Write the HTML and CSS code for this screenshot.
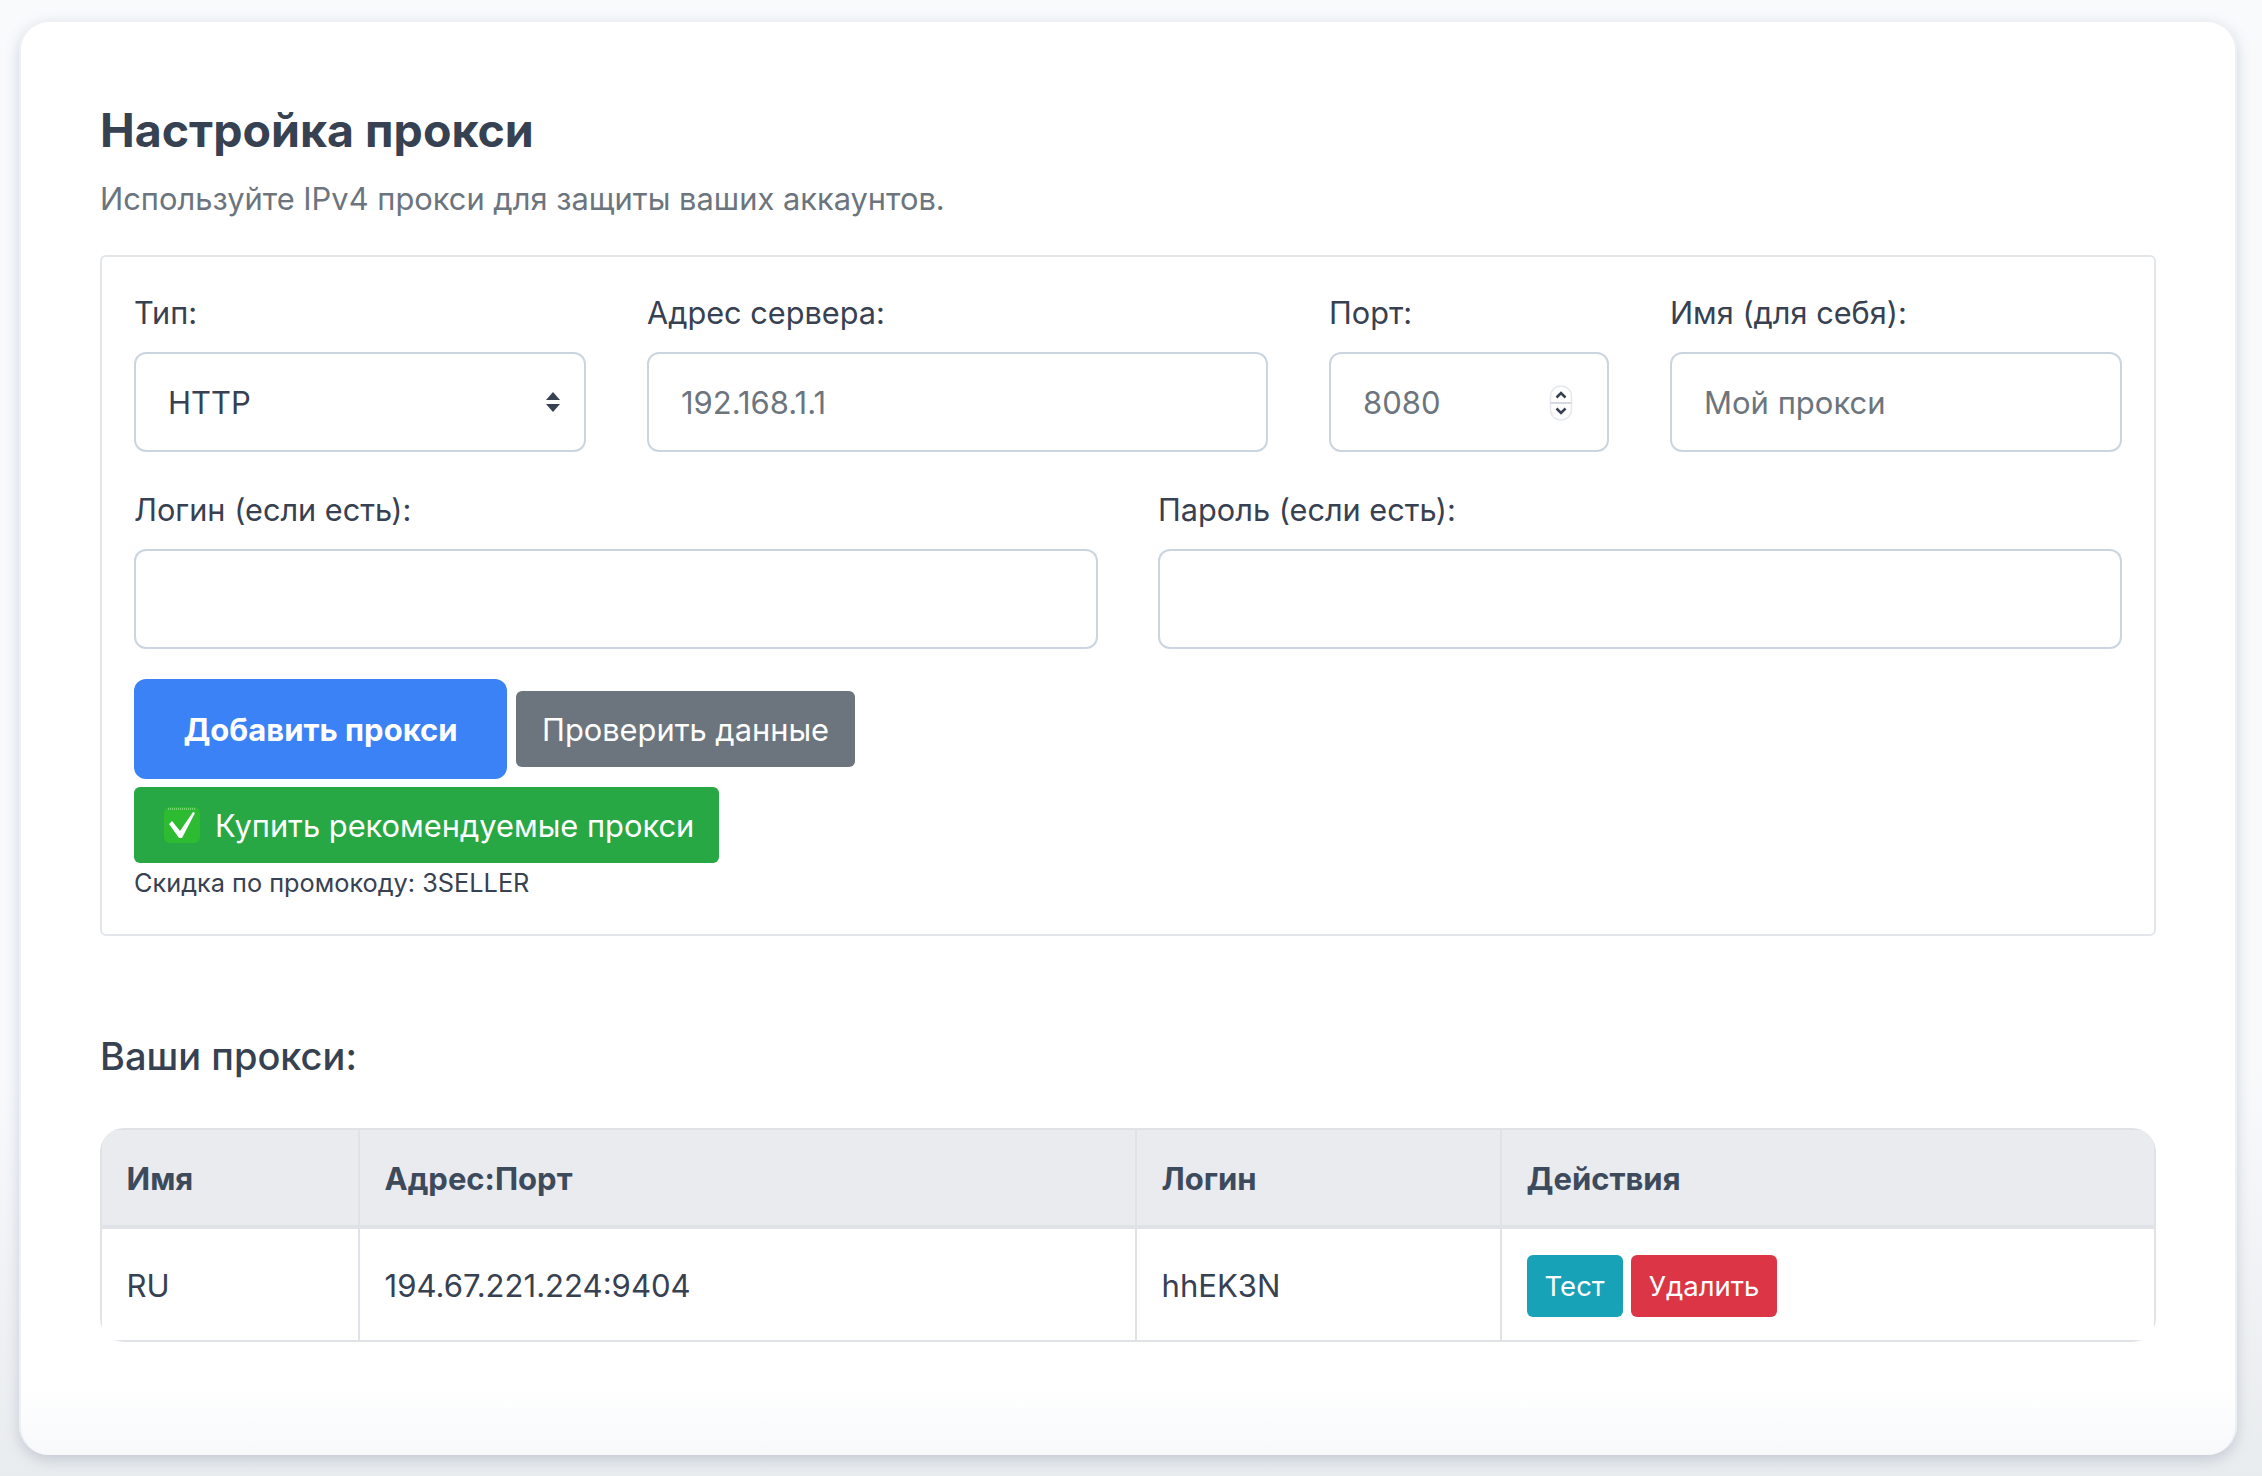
FILE: index.html
```html
<!DOCTYPE html>
<html>
<head>
    <title>Настройка прокси</title>
    <link rel="stylesheet" href="styles.css">
</head>
<body>
    <div class="card">
        <h1>Настройка прокси</h1>
        <p class="subtitle">Используйте IPv4 прокси для защиты ваших аккаунтов.</p>

        <div class="panel">
            <div class="form-row">
                <div class="field field-type">
                    <label for="proxyType">Тип:</label>
                    <div class="control-wrap">
                        <select id="proxyType">
                            <option>HTTP</option>
                            <option>SOCKS5</option>
                        </select>
                        <svg class="select-arrows" width="16" height="22" viewBox="0 0 16 22">
                            <path d="M8 1 15 9H1z M1 13H15L8 21z" fill="#374151"/>
                        </svg>
                    </div>
                </div>
                <div class="field field-host">
                    <label for="proxyHost">Адрес сервера:</label>
                    <input type="text" id="proxyHost" placeholder="192.168.1.1">
                </div>
                <div class="field field-port">
                    <label for="proxyPort">Порт:</label>
                    <div class="control-wrap">
                        <input type="text" id="proxyPort" placeholder="8080">
                        <svg class="port-spinner" width="24" height="36" viewBox="0 0 24 36">
                            <rect x="1.500" y="1" width="21" height="34" rx="10.500" fill="#fff" stroke="#e5e8ec" stroke-width="1.500"/>
                            <path d="M1.500 18H22.500" stroke="#d5dae1" stroke-width="2"/>
                            <path d="M7.500 12.500 12 8 16.500 12.500M7.500 23.500 12 28 16.500 23.500" fill="none" stroke="#374151" stroke-width="2.600"/>
                        </svg>
                    </div>
                </div>
                <div class="field field-name">
                    <label for="proxyName">Имя (для себя):</label>
                    <input type="text" id="proxyName" placeholder="Мой прокси">
                </div>
            </div>

            <div class="form-row form-row-half">
                <div class="field field-half">
                    <label for="proxyLogin">Логин (если есть):</label>
                    <input type="text" id="proxyLogin">
                </div>
                <div class="field field-half">
                    <label for="proxyPass">Пароль (если есть):</label>
                    <input type="password" id="proxyPass">
                </div>
            </div>

            <div class="button-row">
                <button class="btn-primary">Добавить прокси</button>
                <button class="btn btn-gray">Проверить данные</button>
            </div>
            <a class="btn btn-green">
                <svg class="check-icon" width="36" height="36" viewBox="0 0 36 36">
                    <rect width="36" height="36" rx="6" fill="#2dbb32"/>
                    <path d="M4 2H32" stroke="#b5eeb0" stroke-width="1" stroke-dasharray="1 1"/>
                    <path d="M5 17 8 14 16 24 29 5 31 6 18 31H15z" fill="#fff"/>
                </svg>
                Купить рекомендуемые прокси
            </a>
            <div class="promo">Скидка по промокоду: 3SELLER</div>
        </div>

        <h3>Ваши прокси:</h3>

        <div class="table-wrap">
            <table>
                <thead>
                    <tr>
                        <th class="col-name">Имя</th>
                        <th class="col-addr">Адрес:Порт</th>
                        <th class="col-login">Логин</th>
                        <th>Действия</th>
                    </tr>
                </thead>
                <tbody>
                    <tr>
                        <td>RU</td>
                        <td>194.67.221.224:9404</td>
                        <td>hhEK3N</td>
                        <td>
                            <div class="actions">
                                <button class="btn-small btn-teal">Тест</button>
                                <button class="btn-small btn-red">Удалить</button>
                            </div>
                        </td>
                    </tr>
                </tbody>
            </table>
        </div>
    </div>
</body>
</html>
```

FILE: styles.css
```css
* {
    box-sizing: border-box;
}
body {
    margin: 0;
    padding: 20px 25px 21px 19px;
    min-height: 1476px;
    font-family: Inter, "Noto Sans", sans-serif;
    color: #374151;
    background: linear-gradient(to bottom, #f8fafc 0%, #f8fafc 72%, #e9ecef 100%);
}
.card {
    height: 1435px;
    padding: 80px 79px 0 79px;
    background: linear-gradient(to bottom, #fff 95%, #f7f9fb 100%);
    border: 2px solid #edf0f4;
    border-bottom: none;
    border-radius: 30px;
    box-shadow: 0 5px 14px rgba(100, 116, 139, 0.28);
}
h1 {
    margin: 0;
    font-size: 46.500px;
    line-height: 56px;
    font-weight: 700;
    color: #364152;
}
.subtitle {
    margin: 18px 0 0 0;
    font-size: 30.850px;
    line-height: 46px;
    color: #6c757d;
}
.panel {
    margin-top: 33px;
    height: 681px;
    padding: 34px 32px 0 32px;
    border: 2px solid #e2e6ea;
    border-radius: 6px;
}
.form-row {
    display: flex;
    gap: 61px;
    margin-bottom: 36px;
}
.form-row-half {
    gap: 60px;
}
.field-type { width: 452px; }
.field-host { width: 621px; }
.field-port { width: 280px; }
.field-name { width: 452px; }
.field-half { width: 964px; }
label {
    display: block;
    margin-bottom: 17px;
    font-size: 30.700px;
    line-height: 44px;
    color: #374151;
}
input, select {
    display: block;
    width: 100%;
    height: 100px;
    padding: 0 32px;
    background: #fff;
    border: 2px solid #cbd5e0;
    border-radius: 12px;
    font-family: inherit;
    font-size: 31px;
    color: #374151;
    appearance: none;
}
input::placeholder {
    color: #6c757d;
    opacity: 1;
}
.control-wrap {
    position: relative;
}
.select-arrows {
    position: absolute;
    right: 25px;
    top: 39px;
}
.port-spinner {
    position: absolute;
    right: 36px;
    top: 33px;
}
.button-row {
    display: flex;
    align-items: center;
    gap: 9px;
    margin-top: -6px;
}
button {
    font-family: inherit;
    border: none;
    color: #fff;
}
.btn-primary {
    width: 373px;
    height: 100px;
    background: #3b82f6;
    border-radius: 12px;
    font-size: 31px;
    font-weight: 700;
}
.btn {
    display: flex;
    align-items: center;
    height: 76px;
    padding: 0 26px;
    border-radius: 6px;
    font-size: 30.800px;
    color: #fff;
    white-space: nowrap;
}
.btn-gray {
    background: #6c757d;
}
.btn-green {
    width: 585px;
    margin-top: 8px;
    padding-left: 30px;
    background: #28a745;
}
.check-icon {
    flex-shrink: 0;
    margin-right: 15px;
}
.promo {
    margin-top: 5px;
    font-size: 25.300px;
    line-height: 30px;
}
h3 {
    margin: 92px 0 0 0;
    font-size: 38px;
    line-height: 56px;
    font-weight: 500;
    color: #364152;
}
.table-wrap {
    margin-top: 44px;
    height: 214px;
    border-radius: 24px;
    overflow: hidden;
}
table {
    width: 100%;
    border-collapse: collapse;
    table-layout: fixed;
    font-size: 31.100px;
}
th, td {
    padding: 2px 24px 0 24.500px;
    text-align: left;
    border: 2px solid #dfe3e8;
}
th {
    height: 98px;
    background: #e9ebef;
    border-bottom-width: 4px;
    font-size: 31px;
    font-weight: 700;
    color: #3d4a5c;
}
td {
    height: 114px;
}
.col-name { width: 258px; }
.col-addr { width: 777px; }
.col-login { width: 365px; }
.actions {
    display: flex;
    gap: 8px;
}
.btn-small {
    height: 62px;
    padding: 0 18px;
    border-radius: 6px;
    font-size: 27.500px;
}
.btn-teal {
    background: #17a2b8;
}
.btn-red {
    background: #dc3545;
}
```
